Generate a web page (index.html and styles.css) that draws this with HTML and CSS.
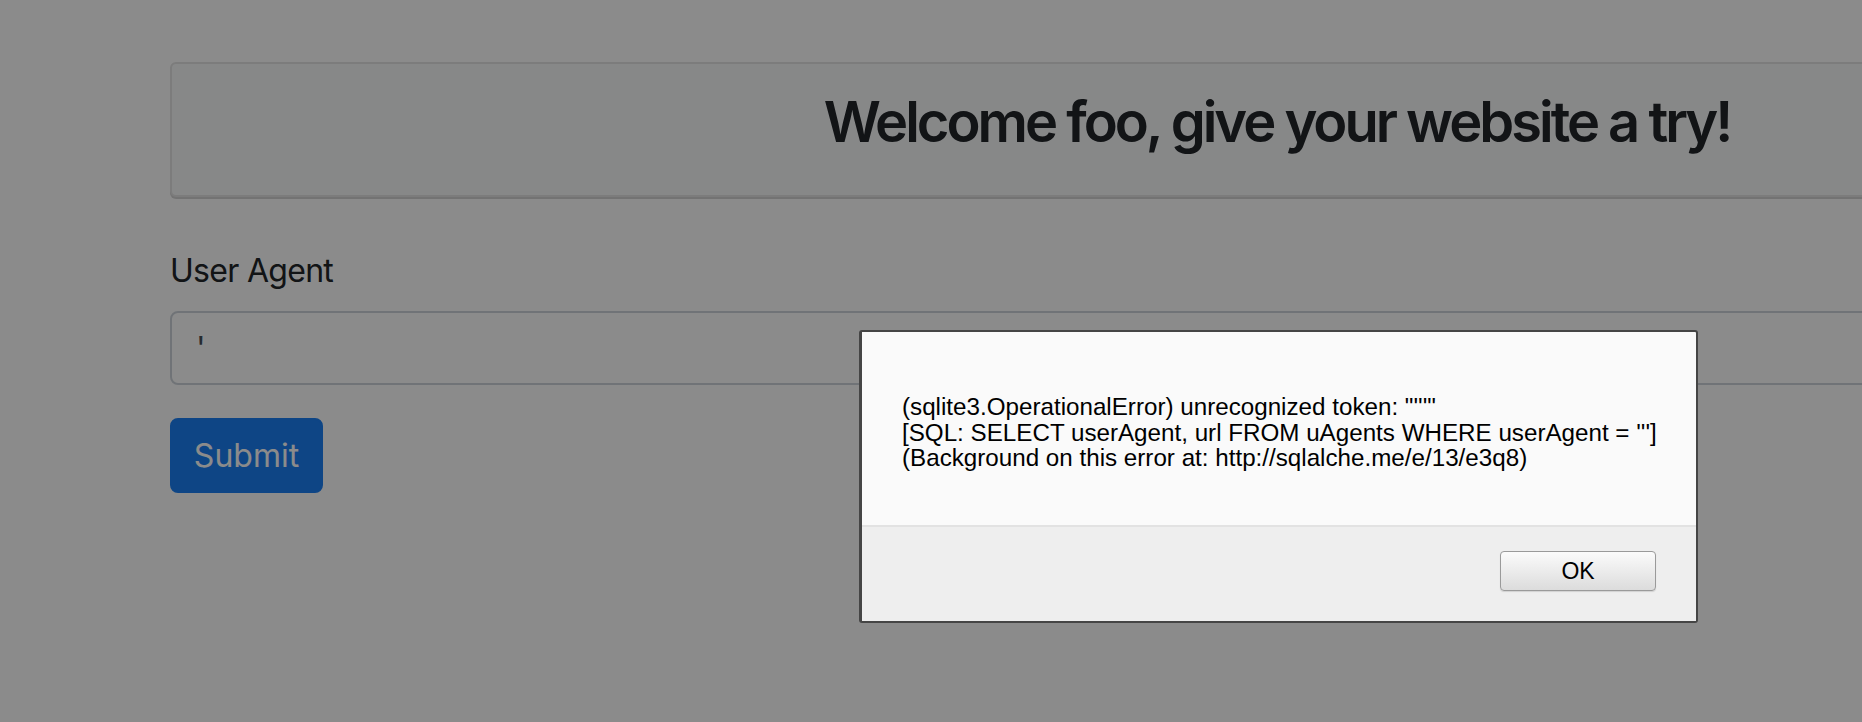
FILE: index.html
```html
<!DOCTYPE html>
<html lang="en">
<head>
<meta charset="utf-8">
<title>User Agent</title>
<link rel="stylesheet" href="styles.css">
</head>
<body>
<div class="page">
  <div class="jumbo">
    <h3 class="jumbo-title">Welcome foo, give your website a try!</h3>
  </div>
  <form class="ua-form">
    <div class="form-group">
      <label class="form-label" for="ua">User Agent</label>
      <input class="form-input" id="ua" type="text" value="'">
    </div>
    <button class="btn-primary" type="button">Submit</button>
  </form>
</div>

<div class="backdrop"></div>

<div class="alert-dialog" role="alertdialog">
  <div class="alert-body">
    <div class="alert-text">(sqlite3.OperationalError) unrecognized token: "'''"<br>[SQL: SELECT userAgent, url FROM uAgents WHERE userAgent = ''']<br>(Background on this error at: http://sqlalche.me/e/13/e3q8)</div>
  </div>
  <div class="alert-footer">
    <button class="alert-ok" type="button">OK</button>
  </div>
</div>
</body>
</html>
```

FILE: styles.css
```css
html, body {
  margin: 0;
  padding: 0;
  overflow: hidden;
  width: 1862px;
  height: 722px;
  background: #ffffff;
  font-family: Inter, "Liberation Sans", sans-serif;
  color: #212529;
}

.page {
  width: 2214px;
  padding: 62px 0 0 170px;
}

.jumbo {
  box-sizing: border-box;
  height: 135px;
  background: #f8f9fa;
  border: 2px solid #e3e3e3;
  border-radius: 6px;
  box-shadow: 0 2px 0 #d4d4d4;
  padding: 25px 0 0;
  text-align: center;
}

.jumbo-title {
  margin: 0;
  font-size: 56px;
  line-height: 1.2;
  font-weight: 600;
  letter-spacing: -3px;
  color: #212529;
}

.ua-form {
  margin-top: 50px;
}

.form-group {
  margin-bottom: 33px;
}

.form-label {
  display: block;
  font-size: 32px;
  line-height: 48px;
  letter-spacing: -0.7px;
  margin-bottom: 16px;
  color: #212529;
}

.form-input {
  display: block;
  box-sizing: border-box;
  width: 100%;
  height: 74px;
  padding: 10px 24px;
  font-family: Inter, "Liberation Sans", sans-serif;
  font-size: 32px;
  color: #495057;
  background: #ffffff;
  border: 2px solid #ced4da;
  border-radius: 8px;
  outline: none;
}

.btn-primary {
  box-sizing: border-box;
  height: 75px;
  width: 153px;
  padding: 0;
  font-family: Inter, "Liberation Sans", sans-serif;
  font-size: 32px;
  color: #ffffff;
  background: #1a7ff5;
  border: 2px solid #1a7ff5;
  border-radius: 8px;
}

.backdrop {
  position: fixed;
  inset: 0;
  background: rgba(0, 0, 0, 0.455);
}

.alert-dialog {
  position: fixed;
  left: 859px;
  top: 330px;
  width: 839px;
  height: 293px;
  box-sizing: border-box;
  border: 2px solid #454545;
  border-left-width: 3px;
  border-radius: 3px;
  background: #fafafa;
  display: flex;
  flex-direction: column;
  font-family: "Liberation Sans", Arial, sans-serif;
  color: #000000;
}

.alert-body {
  height: 193px;
  box-sizing: border-box;
  padding: 62px 20px 0 40px;
}

.alert-text {
  font-size: 24.2px;
  line-height: 25.5px;
  white-space: nowrap;
}

.alert-footer {
  flex: 1;
  background: #eeeeee;
  border-top: 2px solid #e2e2e2;
  display: flex;
  justify-content: flex-end;
  align-items: flex-start;
  padding: 24px 40px 0 0;
}

.alert-ok {
  width: 156px;
  height: 40px;
  box-sizing: border-box;
  font-family: "Liberation Sans", Arial, sans-serif;
  font-size: 23px;
  color: #000000;
  border: 1px solid #9a9a9a;
  border-radius: 4px;
  background: linear-gradient(#fbfbfb, #dcdcdc);
  box-shadow: 0 1px 1px rgba(0,0,0,0.12);
  padding: 0;
}
```
